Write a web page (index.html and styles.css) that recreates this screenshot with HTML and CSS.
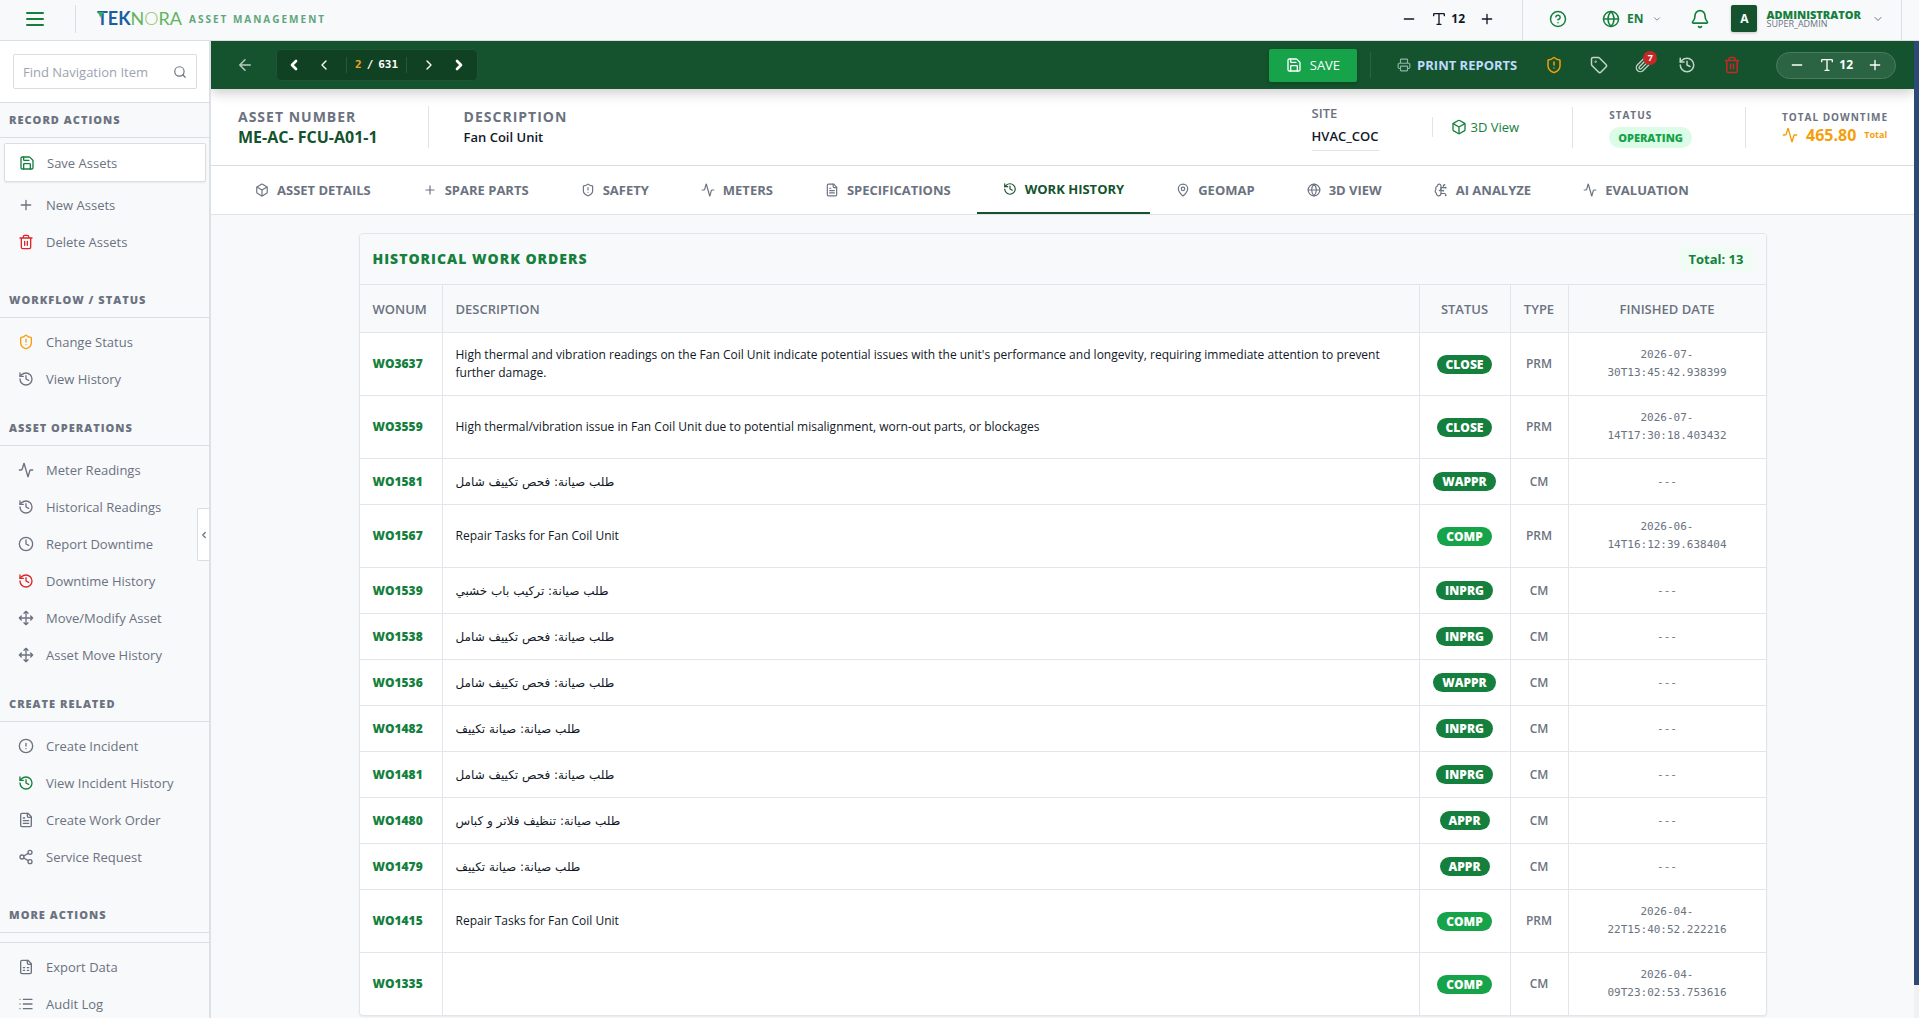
FILE: index.html
```html
<!DOCTYPE html>
<html lang="en">
<head>
<meta charset="utf-8">
<meta name="viewport" content="width=device-width, initial-scale=1">
<title>Teknora Asset Management</title>
<link rel="stylesheet" href="styles.css">
</head>
<body>
<svg class="sprite" aria-hidden="true">
  <symbol id="menu" viewBox="0 0 24 24"><path d="M4 6h16M4 12h16M4 18h16"/></symbol>
  <symbol id="save" viewBox="0 0 24 24"><path d="M15.2 3a2 2 0 0 1 1.4.6l3.8 3.8a2 2 0 0 1 .6 1.4V19a2 2 0 0 1-2 2H5a2 2 0 0 1-2-2V5a2 2 0 0 1 2-2z"/><path d="M17 21v-7a1 1 0 0 0-1-1H8a1 1 0 0 0-1 1v7M7 3v4a1 1 0 0 0 1 1h7"/></symbol>
  <symbol id="plus" viewBox="0 0 24 24"><path d="M5 12h14M12 5v14"/></symbol>
  <symbol id="minus" viewBox="0 0 24 24"><path d="M5 12h14"/></symbol>
  <symbol id="trash" viewBox="0 0 24 24"><path d="M3 6h18M19 6v14c0 1-1 2-2 2H7c-1 0-2-1-2-2V6M8 6V4c0-1 1-2 2-2h4c1 0 2 1 2 2v2M10 11v6M14 11v6"/></symbol>
  <symbol id="shield" viewBox="0 0 24 24"><path d="M20 13c0 5-3.5 7.5-7.66 8.95a1 1 0 0 1-.67-.01C7.5 20.5 4 18 4 13V6a1 1 0 0 1 1-1c2 0 4.500-1.200 6.240-2.720a1.170 1.170 0 0 1 1.520 0C14.510 3.810 17 5 19 5a1 1 0 0 1 1 1z"/><path d="M12 8v4M12 16h.01"/></symbol>
  <symbol id="history" viewBox="0 0 24 24"><path d="M3 12a9 9 0 1 0 9-9 9.750 9.750 0 0 0-6.740 2.740L3 8"/><path d="M3 3v5h5M12 7v5l4 2"/></symbol>
  <symbol id="activity" viewBox="0 0 24 24"><path d="M22 12h-2.480a2 2 0 0 0-1.930 1.460l-2.350 8.360a.25.25 0 0 1-.48 0L9.240 2.180a.25.25 0 0 0-.48 0l-2.350 8.360A2 2 0 0 1 4.490 12H2"/></symbol>
  <symbol id="clock" viewBox="0 0 24 24"><circle cx="12" cy="12" r="10"/><path d="M12 6v6l4 2"/></symbol>
  <symbol id="move" viewBox="0 0 24 24"><path d="M12 2v20M15 19l-3 3-3-3M19 9l3 3-3 3M2 12h20M5 9l-3 3 3 3M9 5l3-3 3 3"/></symbol>
  <symbol id="alert" viewBox="0 0 24 24"><circle cx="12" cy="12" r="10"/><path d="M12 8v4M12 16h.01"/></symbol>
  <symbol id="file" viewBox="0 0 24 24"><path d="M15 2H6a2 2 0 0 0-2 2v16a2 2 0 0 0 2 2h12a2 2 0 0 0 2-2V7Z"/><path d="M14 2v4a2 2 0 0 0 2 2h4M10 9H8M16 13H8M16 17H8"/></symbol>
  <symbol id="sheet" viewBox="0 0 24 24"><path d="M15 2H6a2 2 0 0 0-2 2v16a2 2 0 0 0 2 2h12a2 2 0 0 0 2-2V7Z"/><path d="M14 2v4a2 2 0 0 0 2 2h4M8 13h2M14 13h2M8 17h2M14 17h2"/></symbol>
  <symbol id="share" viewBox="0 0 24 24"><circle cx="18" cy="5" r="3"/><circle cx="6" cy="12" r="3"/><circle cx="18" cy="19" r="3"/><path d="M8.590 13.510l6.830 3.980M15.410 6.510l-6.820 3.980"/></symbol>
  <symbol id="list" viewBox="0 0 24 24"><path d="M3 5h.01M3 12h.01M3 19h.01M8 5h13M8 12h13M8 19h13"/></symbol>
  <symbol id="search" viewBox="0 0 24 24"><circle cx="11" cy="11" r="8"/><path d="m21 21-4.300-4.300"/></symbol>
  <symbol id="box" viewBox="0 0 24 24"><path d="M21 8a2 2 0 0 0-1-1.730l-7-4a2 2 0 0 0-2 0l-7 4A2 2 0 0 0 3 8v8a2 2 0 0 0 1 1.730l7 4a2 2 0 0 0 2 0l7-4A2 2 0 0 0 21 16Z"/><path d="m3.300 7 8.700 5 8.700-5M12 22V12"/></symbol>
  <symbol id="pin" viewBox="0 0 24 24"><path d="M20 10c0 4.993-5.539 10.193-7.399 11.799a1 1 0 0 1-1.202 0C9.539 20.193 4 14.993 4 10a8 8 0 0 1 16 0"/><circle cx="12" cy="10" r="3"/></symbol>
  <symbol id="globe" viewBox="0 0 24 24"><circle cx="12" cy="12" r="10"/><path d="M12 2a14.500 14.500 0 0 0 0 20 14.500 14.500 0 0 0 0-20M2 12h20"/></symbol>
  <symbol id="brain" viewBox="0 0 24 24"><path d="M12 5a3 3 0 1 0-5.997.125 4 4 0 0 0-2.526 5.770 4 4 0 0 0 .556 6.588A4 4 0 1 0 12 18Z"/><path d="M9 13a4.500 4.500 0 0 0 3-4M12 13h4M12 18h6a2 2 0 0 1 2 2v1M12 8h8M16 8V5a2 2 0 0 1 2-2"/><circle cx="16" cy="13" r=".5"/><circle cx="18" cy="3" r=".5"/><circle cx="20" cy="21" r=".5"/><circle cx="20" cy="8" r=".5"/></symbol>
  <symbol id="printer" viewBox="0 0 24 24"><path d="M6 18H4a2 2 0 0 1-2-2v-5a2 2 0 0 1 2-2h16a2 2 0 0 1 2 2v5a2 2 0 0 1-2 2h-2M6 9V3a1 1 0 0 1 1-1h10a1 1 0 0 1 1 1v6"/><rect x="6" y="14" width="12" height="8" rx="1"/></symbol>
  <symbol id="tag" viewBox="0 0 24 24"><path d="M12.586 2.586A2 2 0 0 0 11.172 2H4a2 2 0 0 0-2 2v7.172a2 2 0 0 0 .586 1.414l8.704 8.704a2.426 2.426 0 0 0 3.420 0l6.580-6.580a2.426 2.426 0 0 0 0-3.420z"/><circle cx="7.500" cy="7.500" r=".5"/></symbol>
  <symbol id="clip" viewBox="0 0 24 24"><path d="m21.440 11.050-9.190 9.190a6 6 0 0 1-8.490-8.490l8.570-8.570A4 4 0 1 1 18 8.840l-8.590 8.570a2 2 0 0 1-2.830-2.830l8.490-8.480"/></symbol>
  <symbol id="bell" viewBox="0 0 24 24"><path d="M10.268 21a2 2 0 0 0 3.464 0M3.262 15.326A1 1 0 0 0 4 17h16a1 1 0 0 0 .740-1.673C19.410 13.956 18 12.499 18 8A6 6 0 0 0 6 8c0 4.499-1.411 5.956-2.738 7.326"/></symbol>
  <symbol id="help" viewBox="0 0 24 24"><circle cx="12" cy="12" r="10"/><path d="M9.090 9a3 3 0 0 1 5.830 1c0 2-3 3-3 3M12 17h.01"/></symbol>
  <symbol id="type" viewBox="0 0 24 24"><path d="M12 4v16M4 7V5a1 1 0 0 1 1-1h14a1 1 0 0 1 1 1v2M9 20h6"/></symbol>
  <symbol id="down" viewBox="0 0 24 24"><path d="m6 9 6 6 6-6"/></symbol>
  <symbol id="left" viewBox="0 0 24 24"><path d="m15 18-6-6 6-6"/></symbol>
  <symbol id="right" viewBox="0 0 24 24"><path d="m9 18 6-6-6-6"/></symbol>
  <symbol id="back" viewBox="0 0 24 24"><path d="m12 19-7-7 7-7M19 12H5"/></symbol>
</svg>

<header class="topbar">
  <button class="icon-btn menu-btn" aria-label="Menu"><svg class="i24"><use href="#menu"/></svg></button>
  <div class="brand">
    <svg class="logo" viewBox="0 0 83 20">
      <text x="0" y="16"><tspan class="logo-tek">TEK</tspan><tspan class="logo-nora">N</tspan><tspan class="logo-o">O</tspan><tspan class="logo-nora">RA</tspan></text>
      <path class="logo-leaf" d="M0 3h7c-1 2-3 3-4 6C3 7 2 5 0 3z"/>
    </svg>
    <span class="brand-sub">ASSET MANAGEMENT</span>
  </div>
  <div class="sizer">
    <button class="icon-btn" aria-label="Smaller text"><svg class="i16"><use href="#minus"/></svg></button>
    <span class="sizer-value"><svg class="i16"><use href="#type"/></svg>12</span>
    <button class="icon-btn" aria-label="Larger text"><svg class="i16"><use href="#plus"/></svg></button>
  </div>
  <div class="account">
    <button class="icon-btn" aria-label="Help"><svg class="i18"><use href="#help"/></svg></button>
    <button class="icon-btn lang"><svg class="i18"><use href="#globe"/></svg>EN<svg class="i10 muted"><use href="#down"/></svg></button>
    <button class="icon-btn" aria-label="Notifications"><svg class="i20"><use href="#bell"/></svg></button>
    <button class="icon-btn user">
      <span class="avatar">A</span>
      <span class="user-text"><span class="user-name">ADMINISTRATOR</span><span class="user-role">SUPER_ADMIN</span></span>
      <svg class="i12 muted"><use href="#down"/></svg>
    </button>
  </div>
</header>

<div class="shell">
  <aside class="sidebar">
    <div class="search">
      <label class="search-box"><input type="text" placeholder="Find Navigation Item" aria-label="Find Navigation Item"><svg class="i14"><use href="#search"/></svg></label>
    </div>
    <nav>
      <h2>RECORD ACTIONS</h2>
      <ul class="wide">
        <li><a class="current" href="#"><svg class="i16 green"><use href="#save"/></svg>Save Assets</a></li>
        <li><a href="#"><svg class="i16"><use href="#plus"/></svg>New Assets</a></li>
        <li><a href="#"><svg class="i16 red"><use href="#trash"/></svg>Delete Assets</a></li>
      </ul>
      <h2>WORKFLOW / STATUS</h2>
      <ul>
        <li><a href="#"><svg class="i16 amber"><use href="#shield"/></svg>Change Status</a></li>
        <li><a href="#"><svg class="i16"><use href="#history"/></svg>View History</a></li>
      </ul>
      <h2>ASSET OPERATIONS</h2>
      <ul>
        <li><a href="#"><svg class="i16"><use href="#activity"/></svg>Meter Readings</a></li>
        <li><a href="#"><svg class="i16"><use href="#history"/></svg>Historical Readings</a></li>
        <li><a href="#"><svg class="i16"><use href="#clock"/></svg>Report Downtime</a></li>
        <li><a href="#"><svg class="i16 red"><use href="#history"/></svg>Downtime History</a></li>
        <li><a href="#"><svg class="i16"><use href="#move"/></svg>Move/Modify Asset</a></li>
        <li><a href="#"><svg class="i16"><use href="#move"/></svg>Asset Move History</a></li>
      </ul>
      <h2>CREATE RELATED</h2>
      <ul class="wide">
        <li><a href="#"><svg class="i16"><use href="#alert"/></svg>Create Incident</a></li>
        <li><a href="#"><svg class="i16 green"><use href="#history"/></svg>View Incident History</a></li>
        <li><a href="#"><svg class="i16"><use href="#file"/></svg>Create Work Order</a></li>
        <li><a href="#"><svg class="i16"><use href="#share"/></svg>Service Request</a></li>
      </ul>
      <h2>MORE ACTIONS</h2>
      <hr>
      <ul>
        <li><a href="#"><svg class="i16"><use href="#sheet"/></svg>Export Data</a></li>
        <li><a href="#"><svg class="i16"><use href="#list"/></svg>Audit Log</a></li>
      </ul>
    </nav>
    <button class="collapse" aria-label="Collapse sidebar"><svg class="i10"><use href="#left"/></svg></button>
  </aside>

  <main>
    <div class="toolbar">
      <button class="icon-btn back" aria-label="Back"><svg class="i18"><use href="#back"/></svg></button>
      <div class="pager">
        <button class="icon-btn bold" aria-label="First"><svg class="i16"><use href="#left"/></svg></button>
        <button class="icon-btn" aria-label="Previous"><svg class="i16"><use href="#left"/></svg></button>
        <span class="pager-count"><b>2</b><span>/</span><span>631</span></span>
        <button class="icon-btn" aria-label="Next"><svg class="i16"><use href="#right"/></svg></button>
        <button class="icon-btn bold" aria-label="Last"><svg class="i16"><use href="#right"/></svg></button>
      </div>
      <div class="tools">
        <button class="save-btn"><svg class="i16"><use href="#save"/></svg>SAVE</button>
        <span class="tool-rule"></span>
        <button class="icon-btn print"><svg class="i14"><use href="#printer"/></svg>PRINT REPORTS</button>
        <div class="tool-icons">
          <button class="icon-btn amber" aria-label="Status"><svg class="i18"><use href="#shield"/></svg></button>
          <button class="icon-btn" aria-label="Tag"><svg class="i18"><use href="#tag"/></svg></button>
          <button class="icon-btn attach" aria-label="Attachments"><svg class="i16"><use href="#clip"/></svg><span class="count">7</span></button>
          <button class="icon-btn" aria-label="History"><svg class="i18"><use href="#history"/></svg></button>
          <button class="icon-btn danger" aria-label="Delete"><svg class="i18"><use href="#trash"/></svg></button>
        </div>
        <div class="sizer sizer-pill">
          <button class="icon-btn" aria-label="Smaller text"><svg class="i16"><use href="#minus"/></svg></button>
          <span class="sizer-value"><svg class="i16"><use href="#type"/></svg>12</span>
          <button class="icon-btn" aria-label="Larger text"><svg class="i16"><use href="#plus"/></svg></button>
        </div>
      </div>
    </div>

    <section class="summary">
      <div class="field number"><span class="label">ASSET NUMBER</span><strong class="asset-id">ME-AC- FCU-A01-1</strong></div>
      <div class="field"><span class="label">DESCRIPTION</span><strong class="asset-name">Fan Coil Unit</strong></div>
      <div class="field site"><span class="site-label">SITE</span><strong class="site-name">HVAC_COC</strong></div>
      <a class="view3d" href="#"><svg class="i16"><use href="#box"/></svg>3D View</a>
      <div class="field status"><span class="small-label">STATUS</span><span class="state">OPERATING</span></div>
      <div class="field downtime"><span class="small-label">TOTAL DOWNTIME</span><span class="hours"><svg class="i16"><use href="#activity"/></svg><b>465.80</b><small>Total</small></span></div>
    </section>

    <nav class="tabs">
      <a href="#"><svg class="i14"><use href="#box"/></svg>ASSET DETAILS</a>
      <a href="#"><svg class="i14"><use href="#plus"/></svg>SPARE PARTS</a>
      <a href="#"><svg class="i14"><use href="#shield"/></svg>SAFETY</a>
      <a href="#"><svg class="i14"><use href="#activity"/></svg>METERS</a>
      <a href="#"><svg class="i14"><use href="#file"/></svg>SPECIFICATIONS</a>
      <a href="#" class="active" aria-current="page"><svg class="i14"><use href="#history"/></svg>WORK HISTORY</a>
      <a href="#"><svg class="i14"><use href="#pin"/></svg>GEOMAP</a>
      <a href="#"><svg class="i14"><use href="#globe"/></svg>3D VIEW</a>
      <a href="#"><svg class="i14"><use href="#brain"/></svg>AI ANALYZE</a>
      <a href="#"><svg class="i14"><use href="#activity"/></svg>EVALUATION</a>
    </nav>

    <section class="card">
      <div class="card-head"><h1>HISTORICAL WORK ORDERS</h1><span class="total">Total: 13</span></div>
      <table>
        <colgroup><col class="c-num"><col><col class="c-status"><col class="c-type"><col class="c-date"></colgroup>
        <thead><tr><th>WONUM</th><th>DESCRIPTION</th><th>STATUS</th><th>TYPE</th><th>FINISHED DATE</th></tr></thead>
        <tbody>
          <tr><td>WO3637</td><td>High thermal and vibration readings on the Fan Coil Unit indicate potential issues with the unit's performance and longevity, requiring immediate attention to prevent further damage.</td><td><span class="pill">CLOSE</span></td><td>PRM</td><td>2026-07-<br>30T13:45:42.938399</td></tr>
          <tr><td>WO3559</td><td>High thermal/vibration issue in Fan Coil Unit due to potential misalignment, worn-out parts, or blockages</td><td><span class="pill">CLOSE</span></td><td>PRM</td><td>2026-07-<br>14T17:30:18.403432</td></tr>
          <tr><td>WO1581</td><td><bdi lang="ar">طلب صيانة: فحص تكييف شامل</bdi></td><td><span class="pill">WAPPR</span></td><td>CM</td><td>---</td></tr>
          <tr><td>WO1567</td><td>Repair Tasks for Fan Coil Unit</td><td><span class="pill comp">COMP</span></td><td>PRM</td><td>2026-06-<br>14T16:12:39.638404</td></tr>
          <tr><td>WO1539</td><td><bdi lang="ar">طلب صيانة: تركيب باب خشبي</bdi></td><td><span class="pill">INPRG</span></td><td>CM</td><td>---</td></tr>
          <tr><td>WO1538</td><td><bdi lang="ar">طلب صيانة: فحص تكييف شامل</bdi></td><td><span class="pill">INPRG</span></td><td>CM</td><td>---</td></tr>
          <tr><td>WO1536</td><td><bdi lang="ar">طلب صيانة: فحص تكييف شامل</bdi></td><td><span class="pill">WAPPR</span></td><td>CM</td><td>---</td></tr>
          <tr><td>WO1482</td><td><bdi lang="ar">طلب صيانة: صيانة تكييف</bdi></td><td><span class="pill">INPRG</span></td><td>CM</td><td>---</td></tr>
          <tr><td>WO1481</td><td><bdi lang="ar">طلب صيانة: فحص تكييف شامل</bdi></td><td><span class="pill">INPRG</span></td><td>CM</td><td>---</td></tr>
          <tr><td>WO1480</td><td><bdi lang="ar">طلب صيانة: تنظيف فلاتر و كباس</bdi></td><td><span class="pill">APPR</span></td><td>CM</td><td>---</td></tr>
          <tr><td>WO1479</td><td><bdi lang="ar">طلب صيانة: صيانة تكييف</bdi></td><td><span class="pill">APPR</span></td><td>CM</td><td>---</td></tr>
          <tr><td>WO1415</td><td>Repair Tasks for Fan Coil Unit</td><td><span class="pill comp">COMP</span></td><td>PRM</td><td>2026-04-<br>22T15:40:52.222216</td></tr>
          <tr><td>WO1335</td><td></td><td><span class="pill comp">COMP</span></td><td>CM</td><td>2026-04-<br>09T23:02:53.753616</td></tr>
        </tbody>
      </table>
    </section>
  </main>
  <div class="scroll-track" aria-hidden="true"><div class="scroll-thumb"></div></div>
</div>
</body>
</html>
```
FILE: styles.css
```css
* { box-sizing: border-box; }

body {
  margin: 0;
  height: 100vh;
  display: flex;
  flex-direction: column;
  overflow: hidden;
  background: #f8f9fb;
  color: #6b7280;
  font: 12px/18px "Open Sans", "Noto Sans", "DejaVu Sans", sans-serif;
}

h1, h2, ul { margin: 0; padding: 0; }
ul { list-style: none; }
a { color: inherit; text-decoration: none; }
button { font: inherit; color: inherit; border: 0; padding: 0; cursor: pointer; }

.sprite { position: absolute; width: 0; height: 0; }
svg { flex: none; fill: none; stroke: currentColor; stroke-width: 2; stroke-linecap: round; stroke-linejoin: round; }
.i10 { width: 10px; height: 10px; }
.i12 { width: 12px; height: 12px; }
.i14 { width: 14px; height: 14px; }
.i16 { width: 16px; height: 16px; }
.i18 { width: 18px; height: 18px; }
.i20 { width: 20px; height: 20px; }
.i24 { width: 24px; height: 24px; }
.green { color: #15803d; }
.red { color: #dc2626; }
.amber { color: #f59e0b; }
.muted { color: #6b7280; }

.icon-btn { display: flex; align-items: center; background: none; }

/* Top bar */
.topbar {
  flex: none;
  height: 41px;
  display: flex;
  align-items: center;
  padding: 0 17px 3px 23px;
  border-bottom: 1px solid #dadee3;
}
.menu-btn { color: #15803d; }
.brand {
  display: flex;
  align-items: center;
  gap: 9px;
  margin-left: 28px;
  padding-left: 21px;
  height: 28px;
  border-left: 1px solid #dadee3;
}
.logo { width: 83px; height: 20px; stroke: none; overflow: visible; font: 18px "Lato", sans-serif; }
.logo-tek { fill: #1c5f9f; font-weight: 700; }
.logo-nora { fill: #62b45c; }
.logo-o { fill: #8cc66a; font-weight: 300; }
.logo-leaf { fill: #3cab62; }
.brand-sub { color: #5fa67b; font-size: 10px; font-weight: 700; letter-spacing: 2px; }
.sizer { display: flex; align-items: center; gap: 14px; color: #111827; }
.topbar .sizer { margin-left: auto; padding-right: 27px; }
.sizer-value { display: flex; align-items: center; gap: 4px; font-weight: 700; }
.account {
  align-self: stretch;
  display: flex;
  align-items: center;
  margin-bottom: -3px;
  padding: 0 17px 3px 26px;
  color: #15803d;
  border: solid #dadee3;
  border-width: 0 1px;
}
.lang { gap: 7px; margin: 0 28px 0 35px; font-weight: 700; }
.lang .i10 { margin-left: 2px; }
.user { gap: 9px; margin-left: 21px; }
.avatar {
  width: 26px;
  height: 27px;
  display: grid;
  place-items: center;
  border-radius: 2px;
  background: #14532d;
  color: #fff;
  font-weight: 700;
  box-shadow: 0 1px 3px #0003;
}
.user-text { display: grid; text-align: left; line-height: 9px; margin-right: 2px; }
.user-name { font-weight: 800; font-size: 11px; }
.user-role { color: #6b7280; font-size: 9px; font-weight: 500; }

/* Frame */
.shell { flex: 1; min-height: 0; display: flex; }
.sidebar {
  position: relative;
  flex: none;
  width: 211px;
  overflow: hidden;
  border-right: 2px solid #dde1e6;
}
.search { padding: 13px 12px 13px 13px; background: #fff; border-bottom: 1px solid #dadee3; }
.search-box {
  display: flex;
  align-items: center;
  height: 35px;
  padding: 0 9px;
  background: #fff;
  border: 1px solid #d9dde2;
  border-radius: 2px;
}
.search-box input { flex: 1; min-width: 0; padding: 0; border: 0; outline: 0; font: inherit; font-size: 13px; color: inherit; }
.search-box input::placeholder { color: #9ca3af; }
.sidebar h2 {
  height: 35px;
  padding-left: 9px;
  border-bottom: 1px solid #dadee3;
  font-size: 11px;
  line-height: 34px;
  font-weight: 800;
  letter-spacing: 1px;
}
.sidebar ul { padding: 5px 3px 14px 4px; }
.sidebar ul.wide { padding-bottom: 23px; }
.sidebar hr { height: 10px; margin: 0; border: 0; border-bottom: 1px solid #dadee3; }
.sidebar li a { display: flex; align-items: center; gap: 12px; height: 37px; padding-left: 14px; font-size: 13px; font-weight: 500; }
.sidebar li a.current { height: 39px; margin-bottom: 4px; background: #fff; border: 1px solid #dadee3; border-radius: 2px; box-shadow: 0 1px 2px #0001; }
.collapse {
  position: absolute;
  right: 0;
  top: 467px;
  width: 12px;
  height: 53px;
  display: grid;
  place-items: center;
  background: #fff;
  border: 1px solid #dadee3;
  border-right: 0;
  border-radius: 2px 0 0 2px;
}
.collapse svg { stroke-width: 3; }
main { flex: 1; min-width: 0; overflow: hidden; }
.scroll-track { flex: none; width: 5px; padding-bottom: 33px; background: #f1f1f1; }
.scroll-thumb { height: 100%; background: #2d4a77; }

/* Record toolbar */
.toolbar {
  position: relative;
  height: 48px;
  display: flex;
  align-items: center;
  padding: 0 18px 0 25px;
  background: #14532d;
  color: #fff;
  box-shadow: 0 4px 12px #0003;
}
.back { color: #b9cbc0; }
.pager {
  display: flex;
  align-items: center;
  gap: 14px;
  height: 32px;
  margin-left: 22px;
  padding: 0 10px 0 9px;
  background: #114123;
  border: 1px solid #1f5535;
  border-radius: 5px;
}
.bold svg { stroke-width: 4; }
.pager-count {
  display: flex;
  gap: 5px;
  padding: 0 8px;
  border: solid #24593a;
  border-width: 0 1px;
  font: 700 11px/16px "DejaVu Sans Mono", monospace;
}
.pager-count b { color: #f0a31c; }
.tools { margin-left: auto; display: flex; align-items: center; }
.save-btn {
  display: flex;
  align-items: center;
  gap: 8px;
  height: 33px;
  padding: 0 17px;
  background: #16a34a;
  border-radius: 2px;
  font-size: 13px;
  box-shadow: 0 2px 4px #0003;
}
.tool-rule { width: 1px; height: 26px; margin: 0 26px 0 13px; background: #2b6442; }
.print { gap: 6px; color: #bfdbfe; font-size: 13px; font-weight: 700; }
.print svg { color: #8fb3a8; }
.tool-icons { display: flex; align-items: center; gap: 27px; margin: 0 35px 0 28px; color: #c5d4ca; }
.tool-icons .amber { color: #f59e0b; }
.tool-icons .danger { color: #c62828; }
.attach { position: relative; }
.count {
  position: absolute;
  left: 8px;
  top: -6px;
  width: 14px;
  height: 14px;
  border-radius: 50%;
  background: #c62828;
  color: #fff;
  font-size: 9px;
  font-weight: 700;
  line-height: 14px;
}
.sizer-pill {
  height: 27px;
  padding: 0 12px;
  color: #fff;
  background: #2b6442;
  border: 1px solid #4b7b5e;
  border-radius: 14px;
}

/* Summary strip */
.summary {
  display: flex;
  align-items: center;
  height: 77px;
  padding: 0 26px 0 27px;
  background: #fff;
  border-bottom: 1px solid #d9dce0;
  box-shadow: 0 1px 3px #0002;
}
.field { display: grid; }
.label { font-size: 14px; font-weight: 700; line-height: 21px; letter-spacing: 1px; }
.number { padding-right: 50px; margin-right: 35px; border-right: 1px solid #e0e3e8; }
.asset-id { color: #14532d; font-size: 16px; font-weight: 700; line-height: 21px; }
.asset-name { color: #111827; font-size: 13px; font-weight: 600; line-height: 21px; }
.site { margin-left: auto; }
.site-label { font-size: 13px; font-weight: 600; line-height: 18px; }
.site-name { margin-top: 4px; padding-bottom: 4px; color: #111827; font-size: 13px; font-weight: 600; line-height: 20px; border-bottom: 1px solid #dfe2e6; }
.view3d {
  display: flex;
  align-items: center;
  gap: 4px;
  margin: 0 53px;
  padding-left: 18px;
  color: #15803d;
  font-size: 13px;
  line-height: 20px;
  border-left: 1px solid #e0e3e8;
}
.small-label { font-size: 10px; font-weight: 700; line-height: 16px; letter-spacing: 1px; }
.status { gap: 4px; padding: 0 53px 0 36px; border: solid #e0e3e8; border-width: 0 1px; }
.state { justify-self: start; padding: 0 9px; border-radius: 11px; background: #dcfce7; color: #16a34a; font-size: 11px; font-weight: 800; line-height: 21px; }
.downtime { padding-left: 36px; }
.hours { display: flex; align-items: center; gap: 8px; color: #f59e0b; line-height: 20px; }
.hours b { font-size: 16px; }
.hours small { font-size: 9px; font-weight: 700; }

/* Tabs */
.tabs {
  display: flex;
  height: 49px;
  padding-left: 18px;
  background: #fff;
  border-bottom: 1px solid #dfe2e6;
}
.tabs a { display: flex; align-items: center; gap: 8px; padding: 0 26px; font-size: 13px; font-weight: 700; }
.tabs .active { color: #14532d; border-bottom: 2px solid #14532d; }

/* Work order table */
.card {
  max-width: 1408px;
  margin: 18px auto 0;
  background: #fff;
  border: 1px solid #e2e5e9;
  border-radius: 4px;
  box-shadow: 0 1px 2px #0001;
  overflow: hidden;
}
.card-head {
  display: flex;
  align-items: center;
  justify-content: space-between;
  height: 50px;
  padding: 0 13px;
  background: #f8f9fb;
}
.card-head h1 { color: #15803d; font-size: 14px; font-weight: 800; letter-spacing: 1px; }
.total { padding: 3px 9px; border-radius: 2px; background: #f0fdf4; color: #15803d; font-size: 13px; font-weight: 700; }
table { width: 100%; table-layout: fixed; border-collapse: separate; border-spacing: 0; }
.c-num { width: 82px; }
.c-status { width: 91px; }
.c-type { width: 58px; }
.c-date { width: 198px; }
th, td { padding: 13px 8px; border-top: 1px solid #e2e5e9; border-left: 1px solid #e2e5e9; text-align: center; }
th:first-child, td:first-child { padding-left: 13px; border-left: 0; text-align: left; }
th:nth-child(2), td:nth-child(2) { padding: 13px; text-align: left; }
th { height: 48px; background: #f8f9fb; font-size: 13px; font-weight: 600; }
td:first-child { color: #15803d; font-weight: 800; }
td:nth-child(2) { color: #111827; font-weight: 500; }
td:nth-child(4) { font-weight: 600; }
td:nth-child(5) { font: 11px/18px "DejaVu Sans Mono", monospace; }
td bdi { font-family: "DejaVu Sans", sans-serif; font-weight: 400; }
.pill {
  display: inline-block;
  vertical-align: top;
  padding: 0 9px;
  border-radius: 10px;
  background: #15803d;
  color: #fff;
  font-weight: 800;
  line-height: 19px;
}
.pill.comp { background: #16a34a; }
```
